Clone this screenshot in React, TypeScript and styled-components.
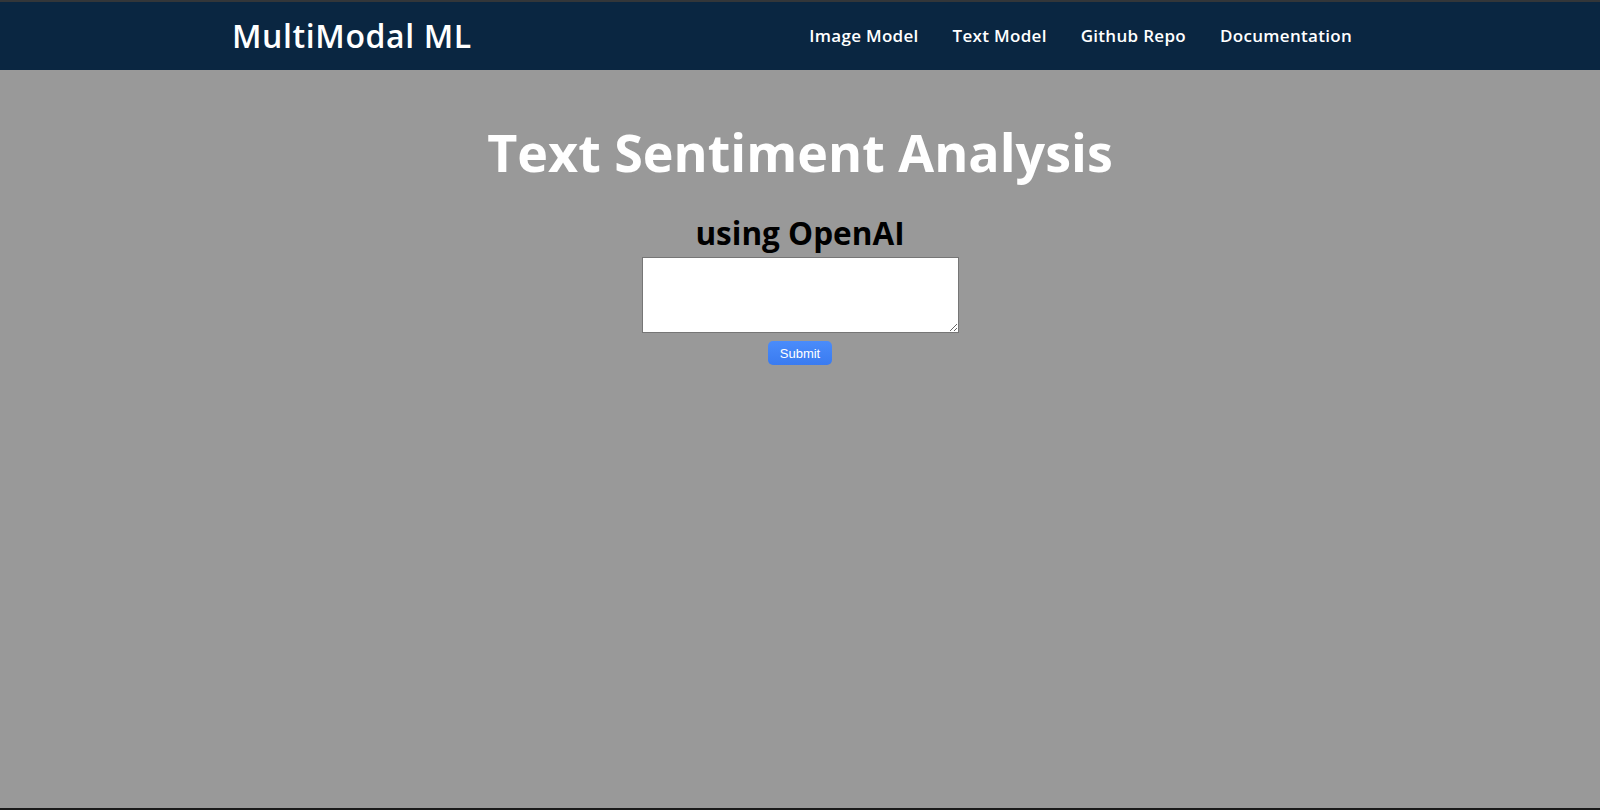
import React from "react";
import styled, { createGlobalStyle } from "styled-components";

const GlobalStyle = createGlobalStyle`
  html, body { margin: 0; padding: 0; }
  body { background: #999999; font-family: "Open Sans", "Noto Sans", sans-serif; }
  * { box-sizing: border-box; }
`;

const Page = styled.div`
  min-height: 810px;
  display: flex;
  flex-direction: column;
  background: #999999;
  border-top: 2px solid #333639;
`;

const NavBar = styled.header`
  background: #0a2641;
  height: 68px;
  display: flex;
  justify-content: center;
`;

const NavInner = styled.div`
  width: 1136px;
  display: flex;
  align-items: center;
  justify-content: space-between;
  padding-right: 16px;
`;

const Logo = styled.div`
  color: #ffffff;
  font-family: "Open Sans", sans-serif;
  font-weight: 600;
  font-size: 32px;
  letter-spacing: 0.6px;
  margin-top: -2px;
`;

const Links = styled.nav`
  display: flex;
  gap: 34px;
`;

const NavLink = styled.a`
  color: #ffffff;
  font-family: "Open Sans", sans-serif;
  font-weight: 600;
  font-size: 17px;
  letter-spacing: 0.3px;
  text-decoration: none;
  margin-top: -1px;
`;

const Main = styled.main`
  flex: 1;
  display: flex;
  flex-direction: column;
  align-items: center;
`;

const Title = styled.h1`
  margin: 42px 0 0;
  color: #ffffff;
  font-family: "Open Sans", sans-serif;
  font-weight: 700;
  font-size: 52px;
  line-height: 80px;
`;

const Subtitle = styled.h2`
  margin: 21px 0 0;
  color: #000000;
  font-family: "Open Sans", sans-serif;
  font-weight: 700;
  font-size: 31.5px;
  line-height: 40px;
`;

const TextBox = styled.textarea`
  margin-top: 4px;
  width: 317px;
  height: 76px;
  border: 1px solid #767676;
  background: #ffffff;
  resize: both;
`;

const SubmitButton = styled.button`
  margin-top: 8px;
  width: 64px;
  height: 24px;
  border: none;
  border-radius: 5px;
  background: linear-gradient(#4a8cfb, #3a7bf0);
  color: #ffffff;
  font-family: "Liberation Sans", Arial, sans-serif;
  font-size: 13px;
  padding: 0;
`;

const BottomStrip = styled.div`
  height: 2px;
  background: #1a1a1a;
`;

export default function App() {
  return (
    <>
      <GlobalStyle />
      <Page>
        <NavBar>
          <NavInner>
            <Logo>MultiModal ML</Logo>
            <Links>
              <NavLink href="#">Image Model</NavLink>
              <NavLink href="#">Text Model</NavLink>
              <NavLink href="#">Github Repo</NavLink>
              <NavLink href="#">Documentation</NavLink>
            </Links>
          </NavInner>
        </NavBar>
        <Main>
          <Title>Text Sentiment Analysis</Title>
          <Subtitle>using OpenAI</Subtitle>
          <TextBox />
          <SubmitButton>Submit</SubmitButton>
        </Main>
        <BottomStrip />
      </Page>
    </>
  );
}
